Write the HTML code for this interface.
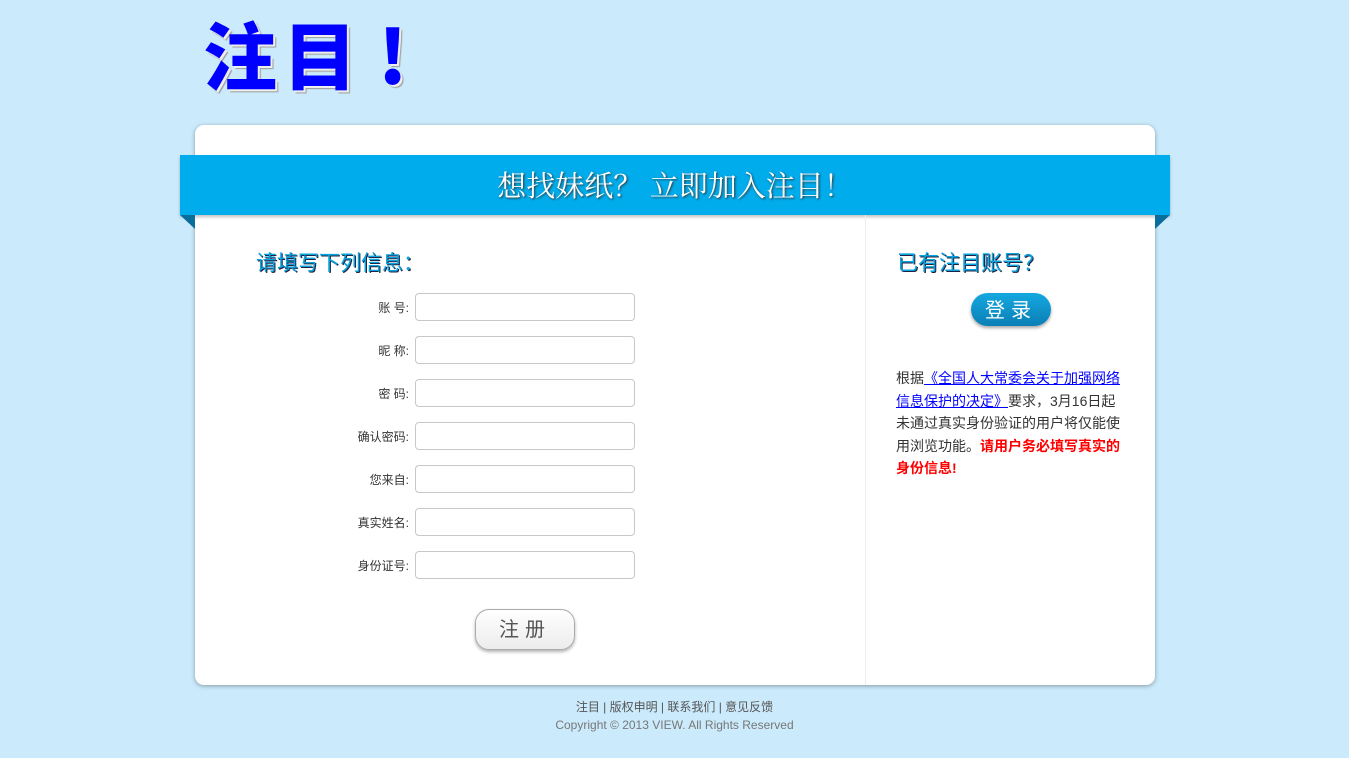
<!DOCTYPE html>
<html><head><meta charset="utf-8"><style>
body{margin:0;background:#cbebfc;width:1349px;height:758px;overflow:hidden;position:relative;font-family:"Liberation Sans","Noto Sans CJK SC",sans-serif;}
.logo{position:absolute;top:8px;font-size:74px;font-weight:900;color:#0000ff;letter-spacing:6px;font-family:"Noto Sans CJK SC",sans-serif;text-shadow:2px 2px 0 #eee,3px 3px 1px #999;line-height:90px;}
.card{position:absolute;left:195px;top:125px;width:960px;height:560px;background:#fff;border-radius:9px;box-shadow:0 1px 5px rgba(0,0,0,.35);}
.ribbon{position:absolute;left:180px;top:155px;width:990px;height:60px;background:#00acec;box-shadow:0 2px 3px rgba(0,0,0,.25);color:#fff;text-align:center;font-size:29px;line-height:60px;font-family:"Noto Serif CJK SC",serif;text-shadow:1px 1px 2px #333;}
.fl{position:absolute;top:215px;width:0;height:0;border-top:14px solid #0a6e9d;}
.divider{position:absolute;left:865px;top:215px;width:1px;height:470px;background:#eee;}
h2{position:absolute;margin:0;font-size:21px;font-weight:normal;color:#0aa3dc;text-shadow:1px 1px 0 #224;}
.row{position:absolute;left:300px;width:335px;height:28px;}
.row span{position:absolute;right:226px;top:6px;font-size:12px;color:#333;}
.row div{position:absolute;left:115px;top:0;width:218px;height:26px;border:1px solid #c8c8c8;border-radius:4px;}
.btn{position:absolute;left:475px;top:609px;width:98px;height:39px;border:1px solid #aaa;border-radius:14px;background:linear-gradient(#fff,#ececec);box-shadow:0 2px 3px rgba(0,0,0,.3);text-align:center;line-height:41px;font-size:20px;color:#555;letter-spacing:6px;}
.login{position:absolute;left:971px;top:293px;width:80px;height:33px;border-radius:17px;background:linear-gradient(#14a8e0,#0a7fb5);box-shadow:0 2px 3px rgba(0,0,0,.35);color:#fff;text-align:center;line-height:37px;font-size:20px;letter-spacing:6px;}
.note{position:absolute;left:896px;top:367px;width:230px;font-size:14px;line-height:22.5px;color:#333;}
.note a{color:#00f;text-decoration:underline;}
.note b{color:#f00;}
.foot{position:absolute;left:0;width:1349px;text-align:center;font-size:12px;color:#555;}
</style></head><body>
<div class="logo" style="left:203px">注目</div>
<div class="logo" style="left:378px">!</div>
<div class="card"></div>
<div class="ribbon">想找妹纸？&nbsp;立即加入注目！</div>
<div class="fl" style="left:180px;border-left:15px solid transparent;"></div>
<div class="fl" style="left:1155px;border-right:15px solid transparent;"></div>
<div class="divider"></div>
<h2 style="left:256px;top:247px;">请填写下列信息：</h2>
<h2 style="left:897px;top:247px;">已有注目账号？</h2>
<div class="row" style="top:293px"><span>账 号:</span><div></div></div>
<div class="row" style="top:336px"><span>昵 称:</span><div></div></div>
<div class="row" style="top:379px"><span>密 码:</span><div></div></div>
<div class="row" style="top:422px"><span>确认密码:</span><div></div></div>
<div class="row" style="top:465px"><span>您来自:</span><div></div></div>
<div class="row" style="top:508px"><span>真实姓名:</span><div></div></div>
<div class="row" style="top:551px"><span>身份证号:</span><div></div></div>
<div class="btn">注册</div>
<div class="login">登录</div>
<div class="note">根据<a>《全国人大常委会关于加强网络信息保护的决定》</a>要求，3月16日起未通过真实身份验证的用户将仅能使用浏览功能。<b>请用户务必填写真实的身份信息!</b></div>
<div class="foot" style="top:698px">注目 | 版权申明 | 联系我们 | 意见反馈</div>
<div class="foot" style="top:718px;color:#777">Copyright © 2013 VIEW. All Rights Reserved</div>
</body></html>
